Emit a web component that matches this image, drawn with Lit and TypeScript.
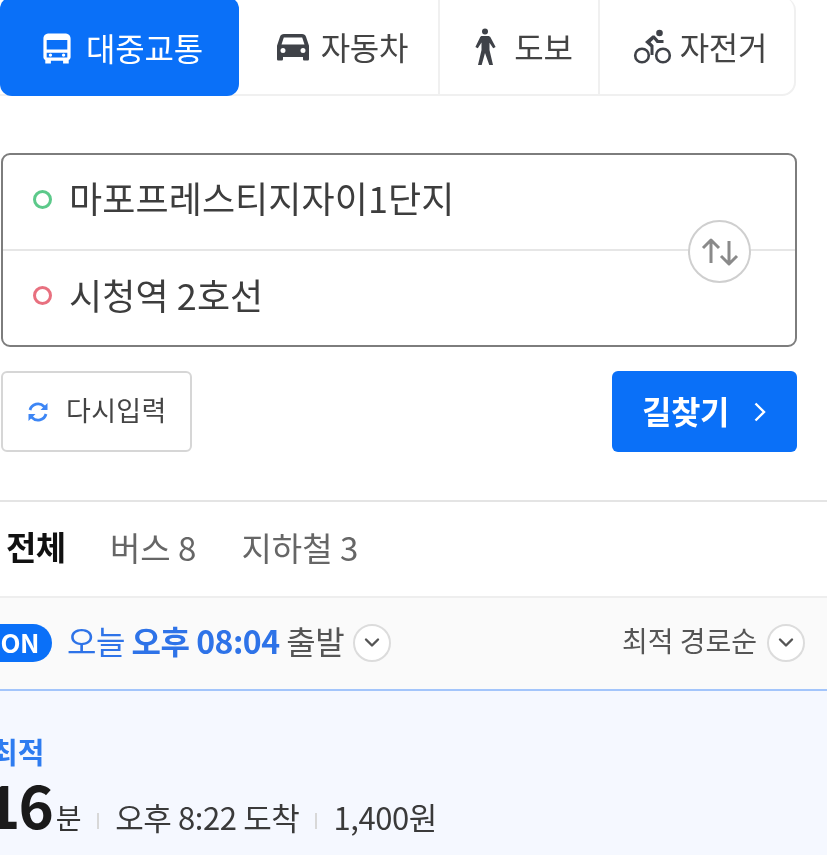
import { LitElement, html, css } from "lit";
import { customElement } from "lit/decorators.js";

const chevron = html`<svg width="18" height="12" viewBox="0 0 18 12" fill="none"><path d="M3 2.500 L9 8.500 L15 2.500" stroke="#555" stroke-width="2.400" stroke-linecap="round" stroke-linejoin="round"/></svg>`;

@customElement("app-root")
export class AppRoot extends LitElement {
  static styles = css`
    :host { display: block; width: 827px; height: 855px; overflow: hidden; background: #fff;
      font-family: "Noto Sans CJK KR", "Noto Sans", sans-serif; color: #333; }
    .page { width: 827px; height: 855px; overflow: hidden; display: flex; flex-direction: column; filter: blur(0.5px); }
    .modes { display: flex; width: 796px; height: 99px; margin-top: -3px; flex: none; box-sizing: border-box;
      border: 2px solid #f0f0f0; border-left: 0; border-top: 0; border-radius: 0 14px 14px 0; }
    .mode { display: flex; align-items: center; justify-content: center; font-size: 32px; letter-spacing: -0.2px;
      color: #444; height: 97px; box-sizing: border-box; border-right: 2px solid #f0f0f0; padding-top: 3px; }
    .mode span { margin-top: -3px; }
    .mode:last-child { border-right: 0; }
    .mode.on { background: #0a70f8; color: #fff; width: 239px; height: 99px; border: 0; border-radius: 12px; gap: 14px; padding-left: 6px; }
    .mode.car { width: 201px; gap: 11px; padding-left: 7px; }
    .mode.walk { width: 160px; gap: 18px; padding-left: 9px; }
    .mode.bike { width: 194px; gap: 8px; padding-left: 6px; }
    .box { position: relative; margin: 57px 0 0 1px; width: 796px; height: 194px; box-sizing: border-box; flex: none;
      border: 2px solid #7d7d7d; border-radius: 9px; display: flex; flex-direction: column; }
    .row { height: 94px; display: flex; align-items: center; gap: 17px; padding-left: 30px; font-size: 36px; letter-spacing: 0.1px;
      color: #3d3d3d; box-sizing: border-box; flex: none; }
    .row + .row { height: 96px; border-top: 2px solid #e6e6e6; }
    .row span { margin-top: -11px; }
    .row + .row span { margin-top: -9px; }
    .dot { width: 19px; height: 19px; box-sizing: border-box; border: 3px solid; border-radius: 50%; flex: none; margin-top: -5px; }
    .dot.g { border-color: #5cc98a; }
    .dot.r { border-color: #e8707f; }
    .swap { position: absolute; right: 44px; top: 65px; width: 63px; height: 63px; box-sizing: border-box; border-radius: 50%;
      background: #fff; border: 2px solid #cfcfcf; display: flex; align-items: center; justify-content: center; }
    .actions { display: flex; justify-content: space-between; width: 796px; margin: 24px 0 0 1px; flex: none; }
    .reset { width: 191px; height: 81px; box-sizing: border-box; border: 2px solid #d6d6d6; border-radius: 6px; display: flex;
      align-items: center; gap: 17px; padding-left: 24px; font-size: 27px; letter-spacing: 0.3px; color: #444; }
    .reset span { margin-top: -4px; }
    .go { width: 185px; height: 81px; border-radius: 6px; background: #0a70f8; color: #fff; font-weight: 700; font-size: 32px;
      letter-spacing: -0.4px; display: flex; align-items: center; justify-content: center; gap: 24px; }
    .go span { margin-top: -3px; }
    .tabs { margin-top: 48px; height: 98px; box-sizing: border-box; border-top: 2px solid #e4e4e4; border-bottom: 2px solid #eee;
      display: flex; font-size: 33px; color: #666; flex: none; }
    .tab { display: flex; align-items: center; height: 96px; box-sizing: border-box; letter-spacing: 0; margin-right: 45px; padding-bottom: 7px; }
    .tab.on { width: 83px; margin-right: 27px; padding-left: 6px; font-weight: 700; color: #111; border-bottom: 2px solid #222; margin-bottom: -2px; height: 98px; font-size: 33px; letter-spacing: -0.5px; padding-bottom: 8px; }
    .filter { height: 91px; background: #fafafa; display: flex; align-items: center; flex: none; box-sizing: border-box; padding: 0 22px 2px 0; }
    .pill { margin-left: -18px; width: 70px; height: 38px; border-radius: 19px; background: #0a70f8; color: #fff; font-weight: 700;
      font-size: 26px; display: flex; align-items: center; justify-content: flex-end; padding: 0 13px 2px 0; box-sizing: border-box; letter-spacing: -0.5px; }
    .when { margin-left: 15px; font-size: 32px; color: #2e73e8; letter-spacing: -0.5px; margin-top: -6px; }
    .when b { font-weight: 700; }
    .when span { color: #555; }
    .circ { width: 38px; height: 38px; box-sizing: border-box; border-radius: 50%; background: #fff; border: 2px solid #dcdcdc;
      display: flex; align-items: center; justify-content: center; flex: none; }
    .when + .circ { margin-left: 9px; }
    .sort { margin-left: auto; font-size: 28px; color: #555; margin-right: 10px; letter-spacing: 0; margin-top: -6px; }
    .card { flex: 1; background: #f5f8ff; border-top: 2px solid #a3c5fb; box-sizing: border-box; padding-top: 40px; }
    .badge { margin-left: -9px; font-size: 29px; font-weight: 700; color: #2e7cf0; line-height: 40px; letter-spacing: 0; }
    .sum { display: flex; align-items: baseline; margin-top: -12px; font-size: 31px; color: #3a3a3a; letter-spacing: -0.4px; }
    .min { font-size: 60px; font-weight: 700; color: #1a1a1a; margin-left: -15px; letter-spacing: -2px; margin-right: 4px; }
    .unit { font-size: 28px; color: #333; }
    .sep { display: inline-block; width: 2px; height: 16px; background: #d8d8d8; margin: 0 16px; }
    .txt { position: relative; top: 1px; }
  `;

  render() {
    return html`<div class="page">
      <div class="modes">
        <div class="mode on">
          <svg width="30" height="33" viewBox="0 0 32 34"><path fill="#fff" fill-rule="evenodd" d="M8 1h16c4 0 6.500 2 6.500 5.500V26c0 1.500-.7 2.600-2 3.200V33h-6v-3H9.500v3h-6v-3.800c-1.300-.6-2-1.700-2-3.200V6.500C1.500 3 4 1 8 1zM5 8v10h22V8zM5 21.500v5h22v-5z"/><circle cx="9" cy="24" r="1.800" fill="#fff"/><circle cx="23" cy="24" r="1.800" fill="#fff"/></svg>
          <span>대중교통</span>
        </div>
        <div class="mode car">
          <svg width="34" height="28" viewBox="0 0 34 28"><path fill="#3f4248" fill-rule="evenodd" d="M8 1h18c2 0 3.400 1 4 2.800l3 9V26c0 1-.6 1.600-1.500 1.600h-3c-1 0-1.500-.6-1.500-1.600v-2H7v2c0 1-.6 1.600-1.500 1.600h-3C1.600 27.600 1 27 1 26V12.800l3-9C4.600 2 6 1 8 1zM7.800 4.500 5.500 11.500h23l-2.300-7zM7 15a2.500 2.500 0 1 0 0 5 2.500 2.500 0 0 0 0-5zm20 0a2.500 2.500 0 1 0 0 5 2.500 2.500 0 0 0 0-5z"/></svg>
          <span>자동차</span>
        </div>
        <div class="mode walk">
          <svg width="22" height="38" viewBox="0 0 22 38"><circle cx="11" cy="3.500" r="3" fill="#3f4248"/><path fill="#3f4248" d="M8 8h6c1.200 0 2 .5 2.600 1.500l5 9.500-2.400 1.300-3.700-5.500V22l3.500 15h-3.700L11 25 7.700 37H4l3.500-15v-7.500l-3.700 5.800L1.400 19 6 9.500C6.500 8.500 7 8 8 8z"/></svg>
          <span>도보</span>
        </div>
        <div class="mode bike">
          <svg width="39" height="36" viewBox="0 0 38 36" fill="none"><circle cx="8.500" cy="26.500" r="6.800" stroke="#3f4248" stroke-width="2.600"/><circle cx="29.500" cy="26.500" r="6.800" stroke="#3f4248" stroke-width="2.600"/><circle cx="26" cy="4" r="3.300" fill="#3f4248"/><path fill="#3f4248" d="M19 6.500 11.500 13l5.500 5v8h3V16.300l-3-3 3.200-3 3 3.700H30v-3h-5L21 6.500z"/></svg>
          <span>자전거</span>
        </div>
      </div>

      <div class="box">
        <div class="row"><i class="dot g"></i><span>마포프레스티지자이1단지</span></div>
        <div class="row"><i class="dot r"></i><span>시청역 2호선</span></div>
        <div class="swap">
          <svg width="40" height="30" viewBox="0 0 40 30" fill="none" stroke="#8a8a8a" stroke-width="3" stroke-linejoin="round"><path d="M11 26V3M3 11l8-8 8 8"/><path d="M29 4v23M21 19l8 8 8-8"/></svg>
        </div>
      </div>

      <div class="actions">
        <div class="reset">
          <svg width="22" height="22" viewBox="0 0 22 22" fill="none" stroke="#3d86f5" stroke-width="2.800"><path d="M3 9a8.300 8.300 0 0 1 14-3.500l2 2"/><path d="M19 13a8.300 8.300 0 0 1-14 3.500l-2-2"/><path fill="#3d86f5" stroke="none" d="M20.500 2v7h-7zM1.500 20v-7h7z"/></svg>
          <span>다시입력</span>
        </div>
        <div class="go"><span>길찾기</span>
          <svg width="14" height="22" viewBox="0 0 14 22" fill="none"><path d="M2.500 2.500 11 11l-8.500 8.500" stroke="#fff" stroke-width="2.400"/></svg>
        </div>
      </div>

      <div class="tabs">
        <div class="tab on">전체</div>
        <div class="tab">버스 8</div>
        <div class="tab">지하철 3</div>
      </div>

      <div class="filter">
        <div class="pill">ON</div>
        <div class="when">오늘 <b>오후 08:04</b> <span>출발</span></div>
        <div class="circ">${chevron}</div>
        <div class="sort">최적 경로순</div>
        <div class="circ">${chevron}</div>
      </div>

      <div class="card">
        <div class="badge">최적</div>
        <div class="sum">
          <span class="min">16</span><span class="unit">분</span><i class="sep"></i><span class="txt">오후 8:22 도착</span><i class="sep"></i><span class="txt">1,400원</span>
        </div>
      </div>
    </div>`;
  }
}
